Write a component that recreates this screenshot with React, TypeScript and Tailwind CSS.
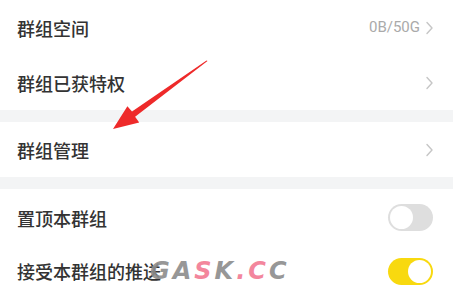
import React from "react";

const Chevron = () => (
  <svg width="9" height="16" viewBox="0 0 9 16" className="ml-[5px]">
    <path d="M2 2.5 L7 8 L2 13.5" fill="none" stroke="#c6c6c6" strokeWidth="1.4" strokeLinecap="round" strokeLinejoin="round" />
  </svg>
);

const Toggle = ({ on }: { on: boolean }) => (
  <div
    className={
      "w-[45px] h-[27px] rounded-full flex items-center px-[2px] " +
      (on ? "bg-[#f8d90f] justify-end" : "bg-[#dedede] justify-start")
    }
  >
    <div className="w-[23px] h-[23px] rounded-full bg-white" />
  </div>
);

const Row = ({ label, right, h = "h-[55px]" }: { label: string; right: React.ReactNode; h?: string }) => (
  <div className={"flex items-center justify-between pl-[17px] pr-[19px] bg-white " + h}>
    <span className="text-[18px] font-medium text-[#333333] leading-none">{label}</span>
    <div className="flex items-center">{right}</div>
  </div>
);

export default function App() {
  return (
    <div
      className="relative w-[453px] h-[298px] overflow-hidden bg-white"
      style={{ fontFamily: '"Noto Sans CJK SC", "Noto Sans", sans-serif' }}
    >
      <Row
        label="群组空间"
        right={
          <>
            <span className="text-[15px] text-[#aaaaaa] leading-none" style={{ fontFamily: '"Roboto", "Liberation Sans", sans-serif' }}>0B/50G</span>
            <Chevron />
          </>
        }
      />
      <Row label="群组已获特权" right={<Chevron />} />
      <div className="h-[12px] bg-[#f3f4f5]" />
      <Row label="群组管理" right={<Chevron />} />
      <div className="h-[12px] bg-[#f3f4f5]" />
      <div className="flex items-center justify-between pl-[17px] pr-[20px] h-[57px]">
        <span className="text-[18px] font-medium text-[#333333] leading-none">置顶本群组</span>
        <Toggle on={false} />
      </div>
      <div className="flex items-center justify-between pl-[17px] pr-[20px] h-[50px]">
        <span className="text-[18px] font-medium text-[#333333] leading-none">接受本群组的推送</span>
        <Toggle on={true} />
      </div>

      <svg className="absolute left-0 top-0" width="453" height="298" viewBox="0 0 453 298">
        <polygon
          points="207.5,61 206.5,60.5 132,111.5 127.4,106.3 113,129 139.2,122.5 135.1,116.8"
          fill="#ee2a2a"
        />
      </svg>

      <div
        className="absolute left-[150px] top-[259px] flex text-[24px] font-black italic leading-none tracking-[3px] opacity-90"
        style={{ fontFamily: '"DejaVu Sans", "Liberation Sans", sans-serif' }}
      >
        <span className="text-[#8c8c8c]">GA</span>
        <span className="text-[#f27a93]">S</span>
        <span className="text-[#8c8c8c]">K</span>
        <span className="text-[#f27a93]">.C</span>
        <span className="text-[#8c8c8c]">C</span>
      </div>
    </div>
  );
}
